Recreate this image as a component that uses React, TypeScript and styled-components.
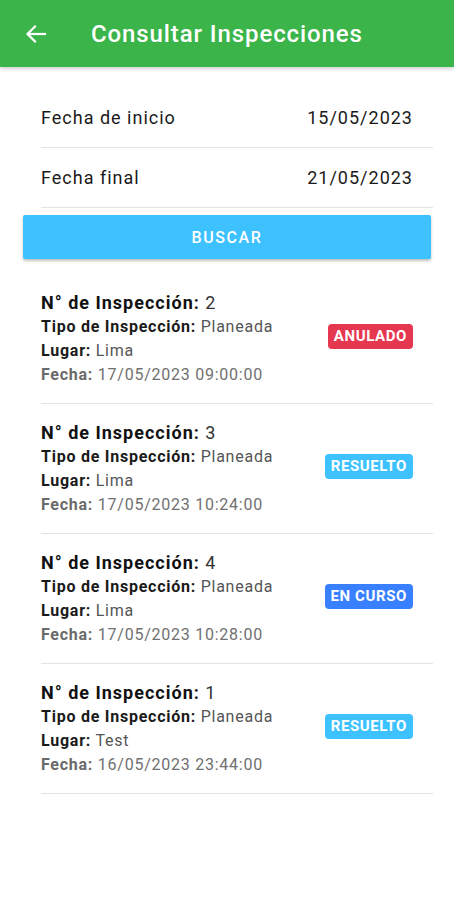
import React from "react";
import styled, { createGlobalStyle } from "styled-components";

const Global = createGlobalStyle`
  html, body { margin: 0; padding: 0; background: #fff; }
  body { font-family: Roboto, "Noto Sans", Arial, sans-serif; }
  * { box-sizing: border-box; }
`;

const Page = styled.div`
  width: 454px;
  min-height: 900px;
  background: #fff;
`;

const Toolbar = styled.header`
  height: 67px;
  background: #3bb54a;
  display: flex;
  align-items: center;
  padding-left: 24px;
  box-shadow: 0 2px 4px rgba(0, 0, 0, 0.18);
  position: relative;
  z-index: 1;
`;

const BackButton = styled.button`
  border: 0;
  background: transparent;
  padding: 0;
  width: 24px;
  height: 24px;
  display: flex;
  align-items: center;
  justify-content: center;
  color: #fff;
`;

const Title = styled.h1`
  margin: 0 0 0 43px;
  color: #fff;
  font-size: 24px;
  font-weight: 500;
  letter-spacing: 0.9px;
`;

const DateList = styled.div`
  margin-top: 21px;
  padding: 0 21px 0 41px;
`;

const DateRow = styled.div`
  height: 60px;
  display: flex;
  align-items: center;
  justify-content: space-between;
  padding-right: 20px;
  border-bottom: 1px solid #e2e2e2;
  font-size: 18px;
  letter-spacing: 1px;
  color: #1a1a1a;
`;

const SearchButton = styled.button`
  display: block;
  margin: 7px 23px 0 23px;
  width: 408px;
  height: 44px;
  border: 0;
  border-radius: 2px;
  background: #3dc2ff;
  color: #fff;
  font-family: Roboto, Arial, sans-serif;
  font-size: 16px;
  font-weight: 500;
  letter-spacing: 1.6px;
  box-shadow: 0 2px 3px rgba(0, 0, 0, 0.25);
`;

const Results = styled.div`
  margin-top: 15px;
  padding: 0 21px 0 41px;
`;

const Item = styled.div`
  display: flex;
  align-items: center;
  justify-content: space-between;
  padding: 17px 20px 16px 0;
  border-bottom: 1px solid #e2e2e2;
`;

const Info = styled.div`
  display: flex;
  flex-direction: column;
`;

const ItemTitle = styled.div`
  font-size: 18px;
  line-height: 24px;
  letter-spacing: 1px;
  font-weight: 700;
  color: #111;
  span { font-weight: 400; color: #333; }
`;

const Line = styled.div<{ $muted?: boolean }>`
  font-size: 16px;
  line-height: 24px;
  letter-spacing: 0.75px;
  color: ${(p) => (p.$muted ? "#707070" : "#555")};
  b {
    font-weight: 700;
    color: ${(p) => (p.$muted ? "#6a6a6a" : "#1a1a1a")};
  }
`;

const Badge = styled.span<{ $color: string }>`
  display: inline-block;
  background: ${(p) => p.$color};
  color: #fff;
  font-size: 15px;
  font-weight: 700;
  letter-spacing: 0.6px;
  line-height: 25px;
  height: 25px;
  padding: 0 6px;
  border-radius: 4px;
  margin-top: -5px;
`;

const statusColors: Record<string, string> = {
  ANULADO: "#e5374f",
  RESUELTO: "#3dc2ff",
  "EN CURSO": "#3880ff",
};

const items = [
  { n: 2, tipo: "Planeada", lugar: "Lima", fecha: "17/05/2023 09:00:00", estado: "ANULADO" },
  { n: 3, tipo: "Planeada", lugar: "Lima", fecha: "17/05/2023 10:24:00", estado: "RESUELTO" },
  { n: 4, tipo: "Planeada", lugar: "Lima", fecha: "17/05/2023 10:28:00", estado: "EN CURSO" },
  { n: 1, tipo: "Planeada", lugar: "Test", fecha: "16/05/2023 23:44:00", estado: "RESUELTO" },
];

export default function App() {
  return (
    <Page>
      <Global />
      <Toolbar>
        <BackButton aria-label="Volver">
          <svg width="24" height="24" viewBox="0 0 24 24" fill="none" stroke="#fff" strokeWidth="2.2" strokeLinecap="square">
            <path d="M21 12H4.5" />
            <path d="M11 4.5L3.5 12L11 19.5" strokeLinejoin="miter" />
          </svg>
        </BackButton>
        <Title>Consultar Inspecciones</Title>
      </Toolbar>
      <DateList>
        <DateRow>
          <span>Fecha de inicio</span>
          <span>15/05/2023</span>
        </DateRow>
        <DateRow>
          <span>Fecha final</span>
          <span>21/05/2023</span>
        </DateRow>
      </DateList>
      <SearchButton>BUSCAR</SearchButton>
      <Results>
        {items.map((it) => (
          <Item key={it.n}>
            <Info>
              <ItemTitle>
                N° de Inspección: <span>{it.n}</span>
              </ItemTitle>
              <Line>
                <b>Tipo de Inspección:</b> {it.tipo}
              </Line>
              <Line>
                <b>Lugar:</b> {it.lugar}
              </Line>
              <Line $muted>
                <b>Fecha:</b> {it.fecha}
              </Line>
            </Info>
            <Badge $color={statusColors[it.estado]}>{it.estado}</Badge>
          </Item>
        ))}
      </Results>
    </Page>
  );
}
